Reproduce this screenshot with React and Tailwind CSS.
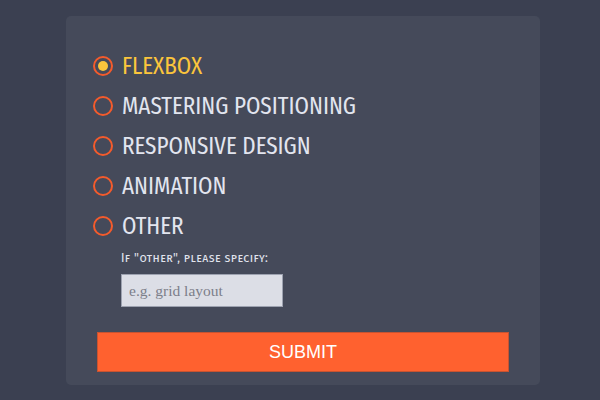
import React, { useState } from 'react';

const options = ['Flexbox', 'Mastering Positioning', 'Responsive Design', 'Animation', 'Other'];

const Radio = ({ label, checked, onSelect }) => (
    <label className="flex items-center h-10 cursor-pointer" onClick={onSelect}>
        <span className="w-[20px] h-[20px] rounded-full border-2 border-[#f45b2c] flex items-center justify-center shrink-0">
            {checked && <span className="w-[10px] h-[10px] rounded-full bg-[#fbc53c]" />}
        </span>
        <span className={`ml-[9px] text-[23px] uppercase leading-none ${checked ? 'text-[#fbc53c]' : 'text-[#e2e5ef]'}`}>
            {label}
        </span>
    </label>
);

export default function App() {
    const [choice, setChoice] = useState('Flexbox');

    return (
        <div className="w-[600px] h-[400px] bg-[#3b4051] pt-4 pl-[66px] font-['Fira_Sans_Condensed','Fira_Sans',sans-serif]">
            <div className="w-[474px] h-[369px] bg-[#454a5a] rounded-[5px] pt-[30px] pl-[27px]">
                {options.map((o) => (
                    <Radio key={o} label={o} checked={choice === o} onSelect={() => setChoice(o)} />
                ))}

                {/* OTHER FIELD */}
                <div className="pl-[28px] mt-[5px]">
                    <p className="text-[13px] text-[#e2e5ef] [font-variant:small-caps] tracking-[0.45px] leading-none">
                        If "other", please specify:
                    </p>
                    <input
                        className="mt-[10px] w-[162px] h-[33px] bg-[#dcdee6] border border-[#9da2b0] px-[7px] text-[15.5px] font-['Liberation_Serif',serif] text-[#444] placeholder:text-[#7c7f8a] outline-none"
                        placeholder="e.g. grid layout"
                    />
                </div>

                <button className="mt-[25px] ml-[4px] w-[412px] h-[40px] bg-[#ff612f] border border-[#c95330] text-white text-[18px] font-['Liberation_Sans',sans-serif] uppercase">
                    Submit
                </button>
            </div>
        </div>
    );
}
